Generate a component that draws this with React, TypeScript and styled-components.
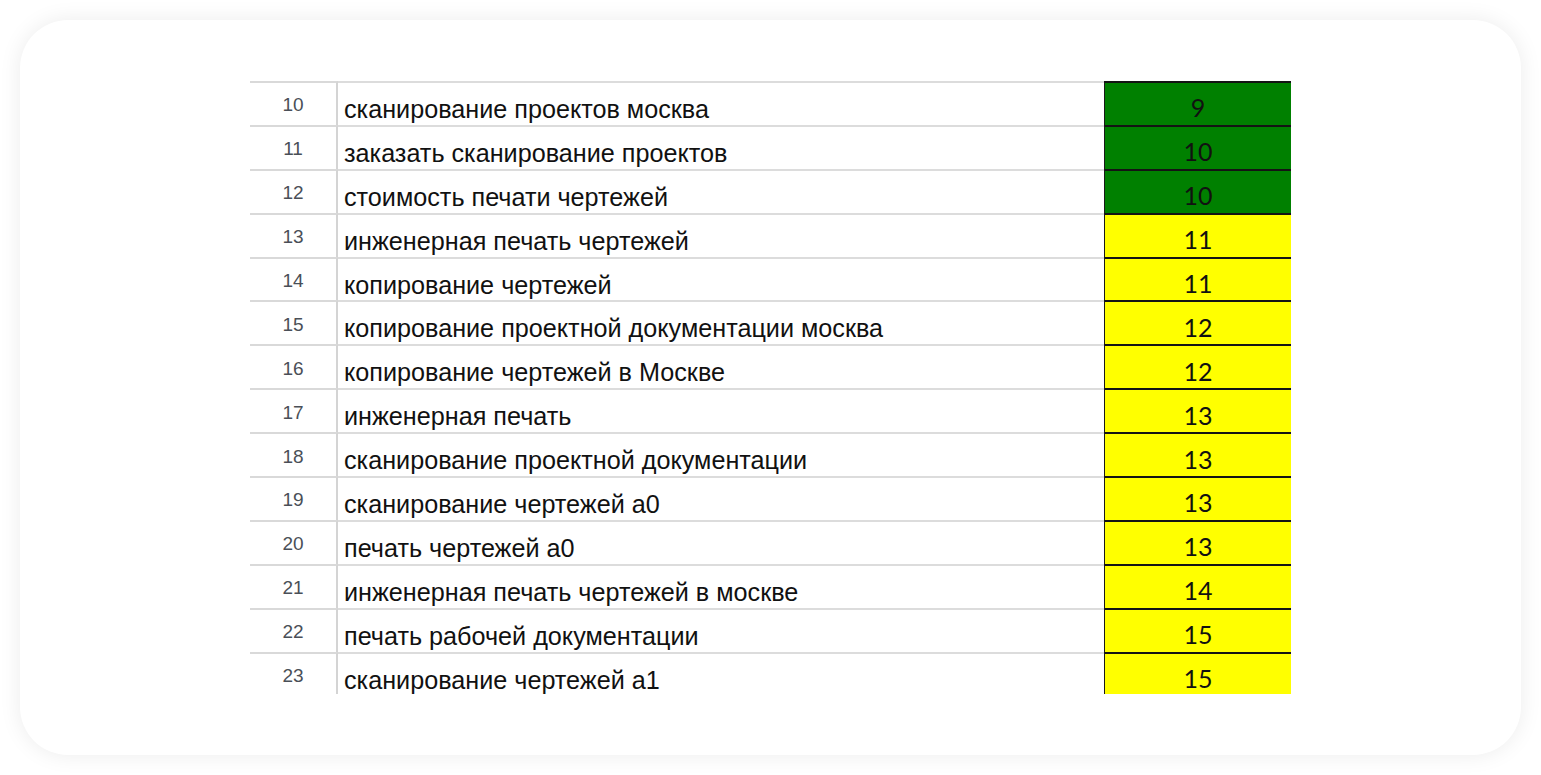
import React from "react";
import styled, { createGlobalStyle } from "styled-components";

const Global = createGlobalStyle`
  html, body { margin: 0; padding: 0; background: #ffffff; }
  body { font-family: "Liberation Sans", Arial, sans-serif; }
`;

const Page = styled.div`
  width: 1541px;
  height: 775px;
  padding: 20px;
  box-sizing: border-box;
  background: #ffffff;
`;

const Card = styled.div`
  height: 735px;
  box-sizing: border-box;
  background: #ffffff;
  border-radius: 48px;
  box-shadow: 0 0 22px rgba(0, 0, 0, 0.08);
  padding: 61px 0 0 230px;
`;

const Sheet = styled.div`
  width: 1041px;
  height: 613px;
  overflow: hidden;
  display: grid;
  grid-template-columns: 88px 766px 187px;
  grid-auto-rows: 43.9px;
`;

const NumCell = styled.div`
  box-sizing: border-box;
  border-top: 2px solid #d9d9d9;
  border-right: 2px solid #d4d4d4;
  display: flex;
  align-items: center;
  justify-content: center;
  padding-top: 3px;
  font-family: "Liberation Sans", Arial, sans-serif;
  font-size: 19px;
  color: #4a4f57;
`;

const TextCell = styled.div`
  box-sizing: border-box;
  border-top: 2px solid #dcdcdc;
  display: flex;
  align-items: center;
  padding: 11px 0 0 6px;
  font-family: "Liberation Sans", Arial, sans-serif;
  font-size: 25.2px;
  color: #111111;
  white-space: nowrap;
`;

const RankCell = styled.div<{ $tone: "green" | "yellow" }>`
  box-sizing: border-box;
  border-top: 2px solid #141414;
  border-left: 1px solid #1a1a1a;
  background: ${(p) => (p.$tone === "green" ? "#008000" : "#ffff00")};
  display: flex;
  align-items: center;
  justify-content: center;
  padding-top: 7px;
  font-family: Lato, "Liberation Sans", sans-serif;
  font-size: 25px;
  color: #111111;
`;

const rows: [number, string, number][] = [
  [10, "сканирование проектов москва", 9],
  [11, "заказать сканирование проектов", 10],
  [12, "стоимость печати чертежей", 10],
  [13, "инженерная печать чертежей", 11],
  [14, "копирование чертежей", 11],
  [15, "копирование проектной документации москва", 12],
  [16, "копирование чертежей в Москве", 12],
  [17, "инженерная печать", 13],
  [18, "сканирование проектной документации", 13],
  [19, "сканирование чертежей а0", 13],
  [20, "печать чертежей а0", 13],
  [21, "инженерная печать чертежей в москве", 14],
  [22, "печать рабочей документации", 15],
  [23, "сканирование чертежей а1", 15],
];

export default function App() {
  return (
    <>
      <Global />
      <Page>
        <Card>
          <Sheet>
            {rows.map(([n, text, rank]) => (
              <React.Fragment key={n}>
                <NumCell>{n}</NumCell>
                <TextCell>{text}</TextCell>
                <RankCell $tone={rank <= 10 ? "green" : "yellow"}>{rank}</RankCell>
              </React.Fragment>
            ))}
          </Sheet>
        </Card>
      </Page>
    </>
  );
}
